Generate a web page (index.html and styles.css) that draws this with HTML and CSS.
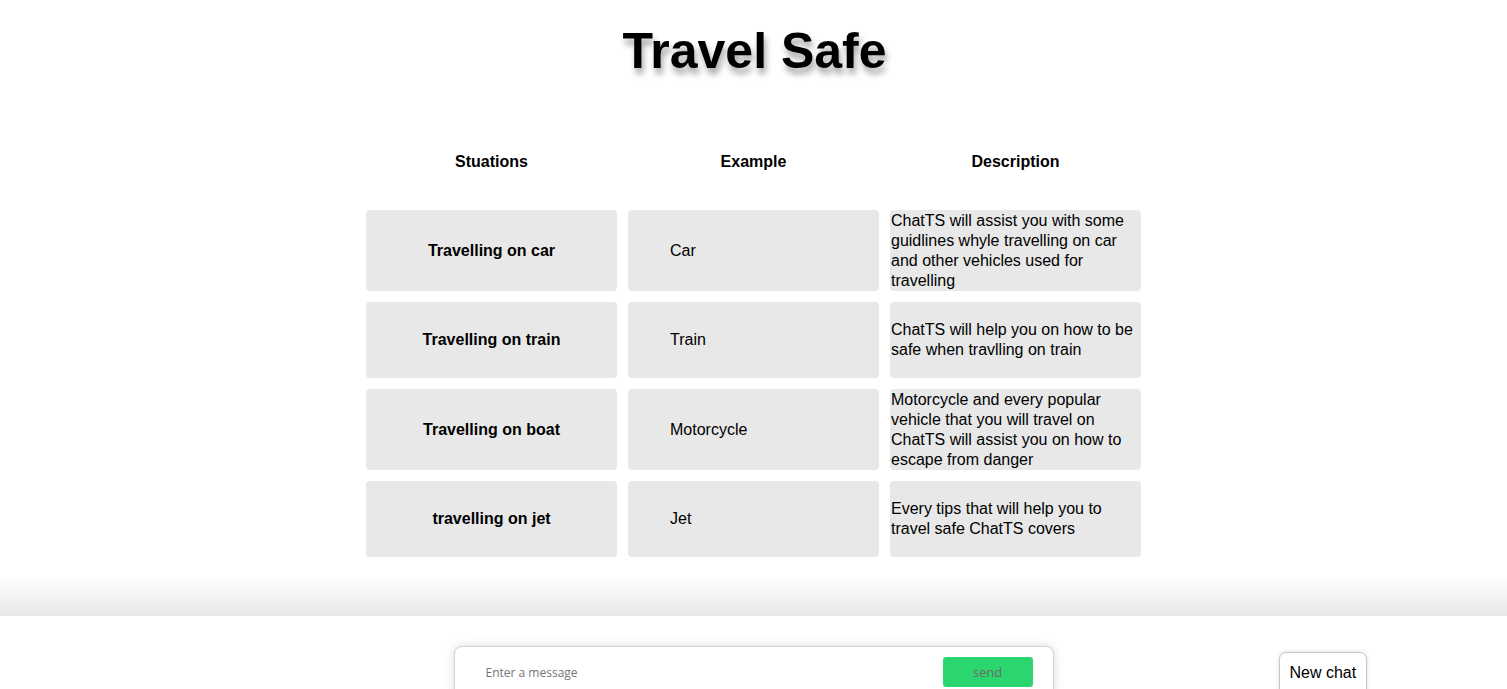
FILE: index.html
```html
<!DOCTYPE html>
<html>
<head>
<meta charset="utf-8">
<link rel="stylesheet" href="styles.css">
</head>
<body>
<div class="page">
  <main class="main">
    <h1 class="title">Travel Safe</h1>
    <table class="grid">
      <thead>
        <tr>
          <th>Stuations</th>
          <th>Example</th>
          <th>Description</th>
        </tr>
      </thead>
      <tbody>
        <tr>
          <td class="sit">Travelling on car</td>
          <td class="ex">Car</td>
          <td class="desc">ChatTS will assist you with some guidlines whyle travelling on car and other vehicles used for travelling</td>
        </tr>
        <tr>
          <td class="sit">Travelling on train</td>
          <td class="ex">Train</td>
          <td class="desc">ChatTS will help you on how to be safe when travlling on train</td>
        </tr>
        <tr>
          <td class="sit">Travelling on boat</td>
          <td class="ex">Motorcycle</td>
          <td class="desc">Motorcycle and every popular vehicle that you will travel on ChatTS will assist you on how to escape from danger</td>
        </tr>
        <tr>
          <td class="sit">travelling on jet</td>
          <td class="ex">Jet</td>
          <td class="desc">Every tips that will help you to travel safe ChatTS covers</td>
        </tr>
      </tbody>
    </table>
  </main>
  <footer class="footer">
    <div class="fade"></div>
    <div class="bar">
      <div class="spacer"></div>
      <form class="composer">
        <input class="msg" type="text" placeholder="Enter a message">
        <button class="send" type="button">send</button>
      </form>
      <div class="side">
        <button class="newchat" type="button">New chat</button>
      </div>
    </div>
  </footer>
</div>
</body>
</html>
```

FILE: styles.css
```css
html, body {
  margin: 0;
  padding: 0;
  background: #ffffff;
  font-family: "Liberation Sans", Arial, sans-serif;
  color: #000;
}

.page {
  height: 100vh;
  display: flex;
  flex-direction: column;
  overflow: hidden;
}

.main {
  flex: 1;
  display: flex;
  flex-direction: column;
  align-items: center;
  min-height: 0;
}

.title {
  margin: 23px 0 0 2px;
  font-size: 50px;
  font-weight: bold;
  line-height: 57px;
  text-shadow: 2px 6px 6px rgba(0, 0, 0, 0.35);
}

.grid {
  margin-top: 32px;
  border-collapse: separate;
  border-spacing: 11px;
  font-size: 16px;
}

.grid th {
  width: 251px;
  height: 76px;
  padding: 2px 0 0 0;
  font-weight: bold;
  text-align: center;
  vertical-align: middle;
  box-sizing: border-box;
}

.grid td {
  width: 251px;
  height: 76px;
  padding: 0.5px 1px;
  background: #e8e8e8;
  border-radius: 4px;
  line-height: 20px;
  vertical-align: middle;
  box-sizing: border-box;
}

.grid td.sit {
  font-weight: bold;
  text-align: center;
}

.grid td.ex {
  padding-left: 42px;
}

.grid td.desc {
  text-align: left;
}

.footer {
  flex: none;
}

.fade {
  height: 40px;
  background: linear-gradient(to bottom, #ffffff 0%, #e8e8e8 100%);
}

.bar {
  height: 73px;
  display: grid;
  grid-template-columns: 1fr 600px 1fr;
  background: #ffffff;
}

.composer {
  margin: 30px 0 0 0;
  height: 52px;
  box-sizing: border-box;
  border: 1px solid #d4d4d4;
  border-radius: 8px;
  box-shadow: 0 0 10px rgba(0, 0, 0, 0.15);
  background: #fff;
  display: flex;
  align-items: flex-start;
  padding: 10px 20px 0 31px;
}

.msg {
  flex: 1;
  border: none;
  outline: none;
  font-family: "Open Sans", "Noto Sans", sans-serif;
  font-size: 12px;
  height: 30px;
  padding: 0;
  color: #333;
  background: transparent;
}

.msg::placeholder {
  color: #757575;
}

.send {
  width: 90px;
  height: 30px;
  border: none;
  border-radius: 3px;
  background: #2bd66f;
  color: #6b6b6b;
  font-family: "Open Sans", "Noto Sans", sans-serif;
  font-size: 13px;
  padding: 0;
}

.side {
  padding: 36px 0 0 225px;
}

.newchat {
  height: 44px;
  padding: 11px 10px 0 10px;
  background: #fff;
  border: 1px solid #c8c8c8;
  border-radius: 7px;
  box-shadow: 0 0 4px rgba(0, 0, 0, 0.15);
  font-family: "Liberation Sans", Arial, sans-serif;
  font-size: 16px;
  color: #000;
  display: flex;
  align-items: flex-start;
  box-sizing: border-box;
}
```
